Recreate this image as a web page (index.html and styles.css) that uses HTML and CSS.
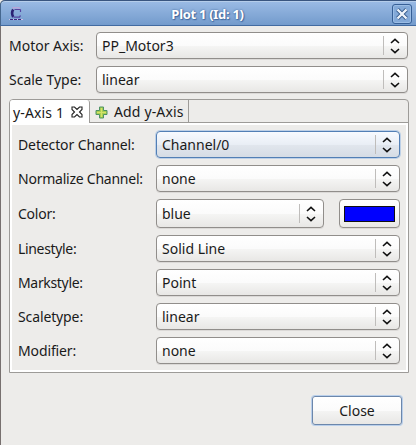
FILE: index.html
```html
<!DOCTYPE html>
<html lang="en">
<head>
<meta charset="utf-8">
<title>Plot 1 (Id: 1)</title>
<link rel="stylesheet" href="styles.css">
</head>
<body>
<svg width="0" height="0" class="defs">
  <symbol id="updown" viewBox="0 0 10 16"><path d="M1 5 5 1.4 9 5M1 11 5 14.6 9 11" fill="none" stroke="#111" stroke-width="1.6"/></symbol>
</svg>
<div class="window">
  <header class="titlebar">
    <svg class="app-icon" width="14" height="14" viewBox="0 0 14 14"><path d="M3.5 1.3Q7-.3 11 1.3" fill="none" stroke="#b9a5d8" stroke-width="1.6"/><path d="M5.5 2.5H11.5M11.5 2.5V5" fill="none" stroke="#5546a0" stroke-width="1.2"/><path d="M4.2 2.5Q2 6 4.2 10" fill="none" stroke="#2b2273" stroke-width="2.6"/><path d="M4.5 10.2H10.5L11.5 8.5" fill="none" stroke="#5546a0" stroke-width="1.3"/><path d="M0 12.5h14" stroke="#c9c0e6"/><path d="M1 12.5h12" stroke="#3a2b80" stroke-dasharray="3 1"/></svg>
    <h1>Plot 1 (Id: 1)</h1>
    <button class="win-close" aria-label="Close window"><svg width="12" height="12" viewBox="0 0 12 12"><path d="m1.5 1.5 9 9m0-9-9 9" stroke="#34598a" stroke-width="4"/><path d="m1.5 1.5 9 9m0-9-9 9" stroke="#eef4fb" stroke-width="2.4"/></svg></button>
  </header>
  <main>
    <div class="row"><span class="label">Motor Axis:</span><button class="combo"><span>PP_Motor3</span><svg><use href="#updown"/></svg></button></div>
    <div class="row"><span class="label">Scale Type:</span><button class="combo"><span>linear</span><svg><use href="#updown"/></svg></button></div>
    <section class="notebook">
      <nav class="tabs">
        <div class="tab active"><span>y-Axis 1</span><svg width="12" height="12" viewBox="0 0 12 12"><path d="M1 1H3.5L6 3.5 8.5 1H11V3.5L8.5 6 11 8.5V11H8.5L6 8.5 3.5 11H1V8.5L3.5 6 1 3.5Z" fill="#fff" stroke="#222" stroke-width="1.1"/></svg></div>
        <div class="tab"><svg width="13" height="13" viewBox="0 0 13 13"><path d="M4.5 1h4v3.5H12v4H8.5V12h-4V8.5H1v-4h3.5Z" fill="#a9cf52" stroke="#4e9365"/><path d="M6.5 2v9M2 6.5h9" stroke="#d4e36a"/></svg><span>Add y-Axis</span></div>
      </nav>
      <div class="page">
        <div class="row"><span class="label wide">Detector Channel:</span><button class="combo focus"><span>Channel/0</span><svg><use href="#updown"/></svg></button></div>
        <div class="row"><span class="label">Normalize Channel:</span><button class="combo"><span>none</span><svg><use href="#updown"/></svg></button></div>
        <div class="row color-row"><span class="label">Color:</span><button class="combo"><span>blue</span><svg><use href="#updown"/></svg></button><button class="swatch" aria-label="blue"><i></i></button></div>
        <div class="row"><span class="label tight">Linestyle:</span><button class="combo"><span>Solid Line</span><svg><use href="#updown"/></svg></button></div>
        <div class="row"><span class="label tight">Markstyle:</span><button class="combo"><span>Point</span><svg><use href="#updown"/></svg></button></div>
        <div class="row"><span class="label wide">Scaletype:</span><button class="combo"><span>linear</span><svg><use href="#updown"/></svg></button></div>
        <div class="row"><span class="label wide">Modifier:</span><button class="combo"><span>none</span><svg><use href="#updown"/></svg></button></div>
      </div>
    </section>
    <footer><button class="close">Close</button></footer>
  </main>
</div>
</body>
</html>
```
FILE: styles.css
```css
* { box-sizing: border-box; }
body { margin: 0; background: #edecea; color: #1a1a1a; font: 14px/20px "Noto Sans", sans-serif; overflow: hidden; }
button { font: inherit; color: inherit; margin: 0; }
span { white-space: nowrap; }
.defs { display: block; }
.window { width: 416px; height: 445px; border-left: 1px solid #77706f; border-radius: 5px 5px 0 0; }
.titlebar { display: grid; grid-template-columns: 22px 1fr 22px; align-items: center; height: 26px; margin-left: -1px; padding: 1px 3px 0 8px; border-top: 1px solid #39557f; border-bottom: 1px solid #426ba1; border-left: 1px solid #45678f; border-radius: 5px 0 0 0; background: linear-gradient(#9bbbe5, #739bcc); box-shadow: inset 0 1px #b5cdea; }
.titlebar h1 { margin: 0; padding-right: 7px; text-align: center; font-size: 13px; line-height: 22px; letter-spacing: -.3px; color: #fff; text-shadow: 0 0 2px #355b91, 1px 1px 1px #466fa6; }
.win-close { display: flex; align-items: center; justify-content: center; width: 20px; height: 20px; padding: 0; margin-left: 1px; border: 1px solid #365f96; border-radius: 3px; background: #83a9d8; box-shadow: inset 0 0 0 1px #9bbde5; }
main { padding: 6px 8px 0 8px; }
.row { display: grid; grid-template-columns: 87px 312px; align-items: center; height: 27px; margin-bottom: 7px; }
.combo { display: flex; align-items: center; height: 27px; padding: 0 0 0 5px; border: 1px solid #918e8b; border-radius: 4px; background: linear-gradient(#fff 0, #fbfbfb 50%, #f5f5f4 52%, #e8e7e5); box-shadow: 0 1px #dbd9d7; text-align: left; }
.combo span { flex: 1; }
.combo svg { width: 24px; height: 19px; padding: 2px 7px 1px 6px; border-left: 1px solid #bfbdbb; }
.combo.focus { border-color: #527fb5; background: linear-gradient(#f7faff, #e9eef5 50%, #e1e6ed 52%, #d5dce5); box-shadow: 0 0 0 1px #bdd0e7; }
.notebook { width: 400px; height: 274px; margin-top: -1px; border: 1px solid #9d9b98; border-radius: 4px 4px 0 0; }
.tabs { display: flex; height: 23px; border-bottom: 1px solid #9d9b98; }
.tab { display: flex; align-items: center; width: 99px; padding: 2px 3px 0 5px; gap: 6px; border-right: 1px solid #9d9b98; }
.tab span { letter-spacing: .15px; }
.tab.active { width: 80px; height: 23px; justify-content: space-between; padding: 0 6px 0 3px; background: #fff; border-radius: 3px 3px 0 0; }
.tab.active span { padding-top: 2px; }
.page { height: 249px; padding: 6px 6px 0; border: 2px solid #fff; }
.page .row { grid-template-columns: 138px 244px; }
.page .label { letter-spacing: -.24px; }
.page .wide { letter-spacing: -.12px; }
.page .tight { letter-spacing: -.33px; }
.page .color-row { grid-template-columns: 138px 168px 61px; height: 29px; }
.color-row .combo { height: 29px; }
.swatch { display: flex; width: 61px; height: 29px; margin-left: 15px; padding: 4px; border: 1px solid #918e8b; border-radius: 4px; background: linear-gradient(#fff, #f8f8f8 50%, #e8e7e5); box-shadow: 0 1px #dbd9d7; }
.swatch i { flex: 1; margin: 2px 0 1px; border: 1px solid #111; background: #00f; }
footer { display: flex; justify-content: flex-end; padding: 23px 6px 0 0; }
.close { width: 90px; height: 29px; padding: 0; border: 1px solid #6c87ab; border-radius: 3px; background: linear-gradient(#fff, #fbfbfb 50%, #f4f4f3 52%, #e8e7e5); box-shadow: 0 0 0 1px #b9cfeb; }
```
